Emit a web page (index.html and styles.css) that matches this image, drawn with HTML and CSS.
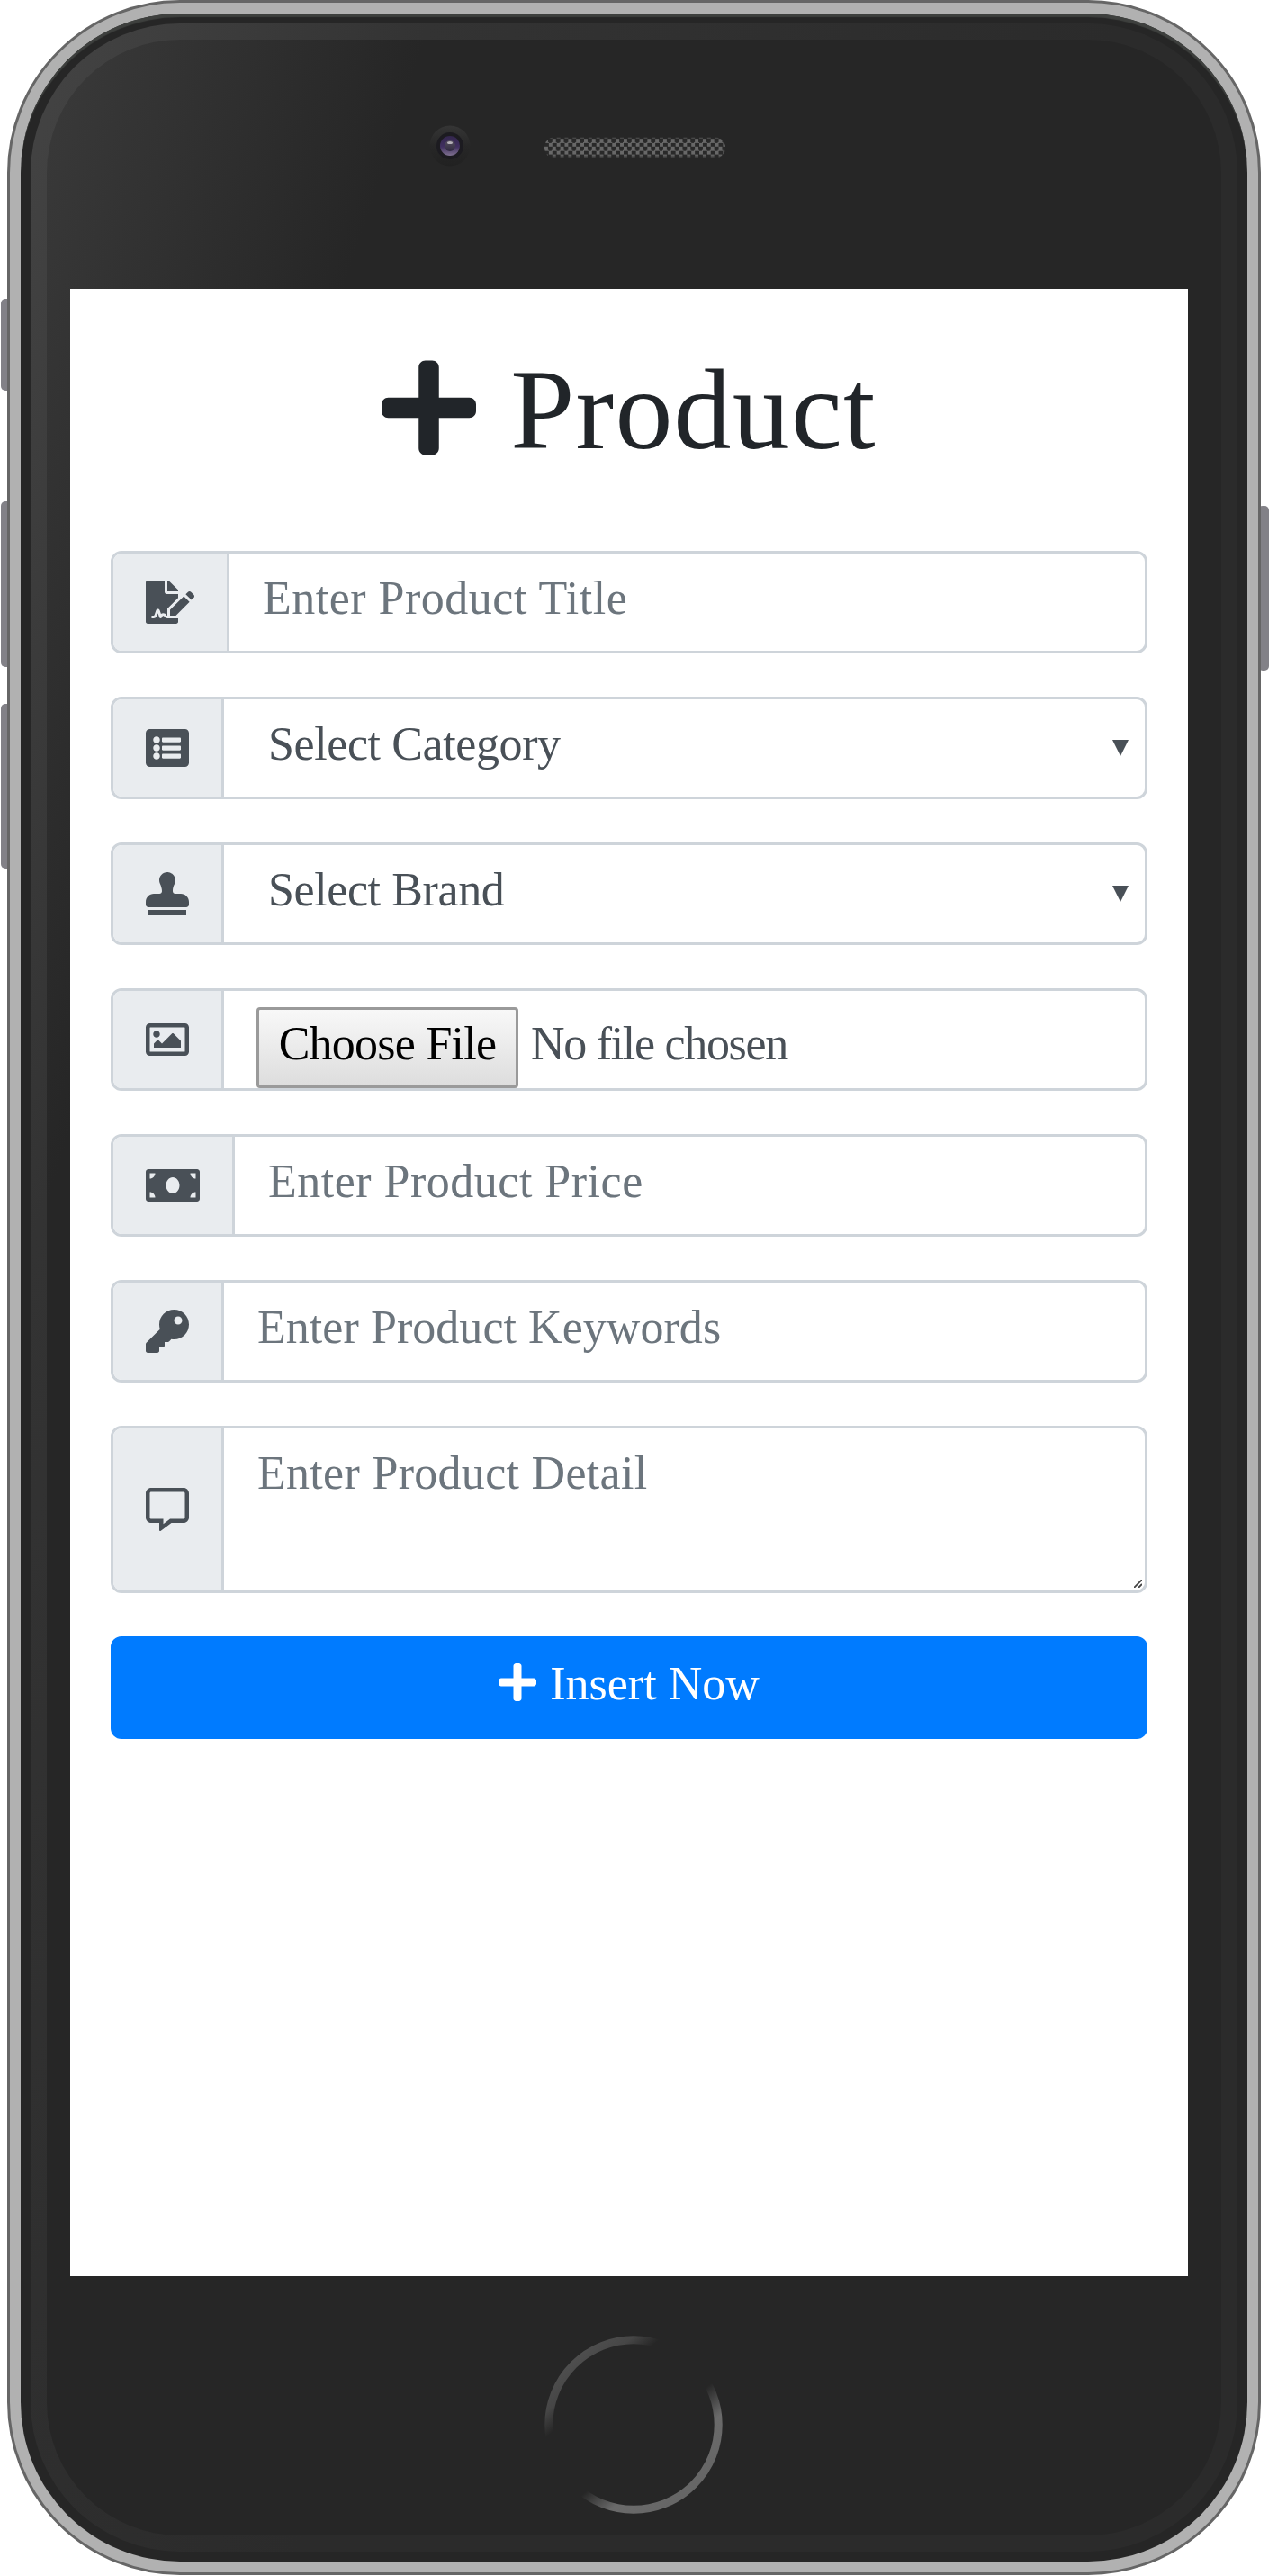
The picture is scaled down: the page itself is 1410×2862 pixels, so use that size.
FILE: index.html
```
<!DOCTYPE html>
<html lang="en">
<head>
<meta charset="utf-8">
<title>Product</title>
<link rel="stylesheet" href="styles.css">
</head>
<body>
<div class="device">
  <i class="side mute"></i><i class="side vol-up"></i><i class="side vol-down"></i><i class="side power"></i>
  <div class="shell"><div class="rim"><div class="bevel"><div class="face">
    <div class="sensors">
      <svg class="camera" viewBox="0 0 46 46">
        <defs>
          <linearGradient id="housing" x1="0" y1="0" x2="0" y2="1"><stop offset="0" stop-color="#353535"/><stop offset=".5" stop-color="#272727"/><stop offset="1" stop-color="#212121"/></linearGradient>
          <linearGradient id="lens" x1="0" y1="0" x2="0" y2="1"><stop offset="0" stop-color="#33264d"/><stop offset=".55" stop-color="#413060"/><stop offset="1" stop-color="#7f7190"/></linearGradient>
          <linearGradient id="pupil" x1="0" y1="0" x2="0" y2="1"><stop offset="0" stop-color="#56505f"/><stop offset="1" stop-color="#302941"/></linearGradient>
        </defs>
        <circle cx="23" cy="23" r="22.5" fill="url(#housing)"/>
        <circle cx="23" cy="23" r="15" fill="#1c1b20"/>
        <circle cx="23" cy="23" r="11" fill="url(#lens)"/>
        <circle cx="23" cy="23" r="6" fill="url(#pupil)"/>
        <ellipse cx="23" cy="19.5" rx="3" ry="1.6" fill="#b5b0b8"/>
      </svg>
      <div class="speaker"></div>
    </div>
    <main class="screen">
      <h1 class="title">
        <svg class="title-icon" viewBox="0 0 448 512"><path d="M416 208H272V64c0-17.67-14.33-32-32-32h-32c-17.67 0-32 14.33-32 32v144H32c-17.67 0-32 14.33-32 32v32c0 17.67 14.33 32 32 32h144v144c0 17.67 14.33 32 32 32h32c17.67 0 32-14.33 32-32V304h144c17.67 0 32-14.33 32-32v-32c0-17.67-14.33-32-32-32z"/></svg>
        <span>Product</span>
      </h1>
      <form class="form">
        <div class="group">
          <div class="addon"><svg viewBox="0 0 576 512"><path d="M218.17 424.14c-2.95-5.92-8.09-6.52-10.17-6.52s-7.22.59-10.02 6.19l-7.67 15.34c-6.37 12.78-25.03 11.37-29.48-2.09L144 386.59l-10.61 31.88c-5.89 17.66-22.38 29.53-41 29.53H80c-8.84 0-16-7.16-16-16s7.16-16 16-16h12.39c4.83 0 9.11-3.08 10.64-7.66l18.19-54.64c3.3-9.81 12.44-16.41 22.78-16.41s19.48 6.59 22.77 16.41l13.88 41.64c19.75-16.19 54.06-9.7 66 14.16 1.89 3.78 5.49 5.95 9.36 6.26v-82.12l128-127.09V160H248c-13.2 0-24-10.8-24-24V0H24C10.7 0 0 10.7 0 24v464c0 13.3 10.7 24 24 24h336c13.3 0 24-10.7 24-24v-40l-128-.11c-16.12-.31-30.58-9.28-37.83-23.75zM384 121.9c0-6.3-2.5-12.4-7-16.9L279.1 7c-4.5-4.5-10.6-7-17-7H256v128h128v-6.1zm-96 225.06V416h68.99l161.68-162.78-67.88-67.88L288 346.96zm280.54-179.63l-31.87-31.87c-9.94-9.94-26.07-9.94-36.01 0l-27.25 27.25 67.88 67.88 27.25-27.25c9.95-9.94 9.95-26.07 0-36.01z"/></svg></div>
          <div class="control placeholder"><span>Enter Product Title</span></div>
        </div>
        <div class="group">
          <div class="addon"><svg viewBox="0 0 512 512"><path d="M464 480H48c-26.51 0-48-21.49-48-48V80c0-26.51 21.49-48 48-48h416c26.51 0 48 21.49 48 48v352c0 26.51-21.49 48-48 48zM128 120c-22.091 0-40 17.909-40 40s17.909 40 40 40 40-17.909 40-40-17.909-40-40-40zm0 96c-22.091 0-40 17.909-40 40s17.909 40 40 40 40-17.909 40-40-17.909-40-40-40zm0 96c-22.091 0-40 17.909-40 40s17.909 40 40 40 40-17.909 40-40-17.909-40-40-40zm288-136v-32c0-6.627-5.373-12-12-12H204c-6.627 0-12 5.373-12 12v32c0 6.627 5.373 12 12 12h200c6.627 0 12-5.373 12-12zm0 96v-32c0-6.627-5.373-12-12-12H204c-6.627 0-12 5.373-12 12v32c0 6.627 5.373 12 12 12h200c6.627 0 12-5.373 12-12zm0 96v-32c0-6.627-5.373-12-12-12H204c-6.627 0-12 5.373-12 12v32c0 6.627 5.373 12 12 12h200c6.627 0 12-5.373 12-12z"/></svg></div>
          <div class="control select"><span class="category">Select Category</span><svg class="caret" viewBox="0 0 18 18"><path d="M0 0h18L9 18z"/></svg></div>
        </div>
        <div class="group">
          <div class="addon"><svg viewBox="0 0 512 512"><path d="M32 512h448v-64H32v64zm384-256h-66.56c-16.26 0-29.44-13.18-29.44-29.44v-9.46c0-27.37 8.88-53.41 21.46-77.72 9.11-17.61 12.9-38.39 9.05-60.42-6.77-38.78-38.47-70.7-77.26-77.45C212.62-9.04 160 37.33 160 96c0 14.16 3.12 27.54 8.69 39.58C182.02 164.43 192 194.7 192 226.49v.07c0 16.26-13.18 29.44-29.44 29.44H96c-53.02 0-96 42.98-96 96v32c0 17.67 14.33 32 32 32h448c17.67 0 32-14.33 32-32v-32c0-53.02-42.98-96-96-96z"/></svg></div>
          <div class="control select"><span class="brand">Select Brand</span><svg class="caret" viewBox="0 0 18 18"><path d="M0 0h18L9 18z"/></svg></div>
        </div>
        <div class="group">
          <div class="addon"><svg viewBox="0 0 512 512"><path d="M464 64H48C21.49 64 0 85.49 0 112v288c0 26.51 21.49 48 48 48h416c26.51 0 48-21.49 48-48V112c0-26.51-21.49-48-48-48zm-6 336H54a6 6 0 0 1-6-6V118a6 6 0 0 1 6-6h404a6 6 0 0 1 6 6v276a6 6 0 0 1-6 6zM128 152c-22.091 0-40 17.909-40 40s17.909 40 40 40 40-17.909 40-40-17.909-40-40-40zM96 352h320v-80l-87.515-87.515c-4.686-4.686-12.284-4.686-16.971 0L192 304l-39.515-39.515c-4.686-4.686-12.284-4.686-16.971 0L96 304v48z"/></svg></div>
          <div class="control file"><span class="file-button">Choose File</span><span class="file-name">No file chosen</span></div>
        </div>
        <div class="group">
          <div class="addon"><svg viewBox="0 0 640 512"><path d="M608 64H32C14.33 64 0 78.33 0 96v320c0 17.67 14.33 32 32 32h576c17.67 0 32-14.33 32-32V96c0-17.67-14.33-32-32-32zM48 400v-64c35.35 0 64 28.65 64 64H48zm0-224v-64h64c0 35.35-28.65 64-64 64zm272 176c-44.19 0-80-42.99-80-96 0-53.02 35.82-96 80-96s80 42.98 80 96c0 53.03-35.83 96-80 96zm272 48h-64c0-35.35 28.65-64 64-64v64zm0-224c-35.35 0-64-28.65-64-64h64v64z"/></svg></div>
          <div class="control placeholder"><span>Enter Product Price</span></div>
        </div>
        <div class="group">
          <div class="addon"><svg viewBox="0 0 512 512"><path d="M512 176.001C512 273.203 433.202 352 336 352c-11.22 0-22.19-1.062-32.827-3.069l-24.012 27.014A23.999 23.999 0 0 1 261.223 384H224v40c0 13.255-10.745 24-24 24h-40v40c0 13.255-10.745 24-24 24H24c-13.255 0-24-10.745-24-24v-78.059c0-6.365 2.529-12.47 7.029-16.971l161.802-161.802C163.108 213.814 160 195.271 160 176 160 78.798 238.797.001 335.999 0 433.488-.001 512 78.511 512 176.001zM336 128c0 26.51 21.49 48 48 48s48-21.49 48-48-21.49-48-48-48-48 21.49-48 48z"/></svg></div>
          <div class="control placeholder"><span class="keywords">Enter Product Keywords</span></div>
        </div>
        <div class="group tall">
          <div class="addon"><svg viewBox="0 0 512 512"><path d="M448 0H64C28.7 0 0 28.7 0 64v288c0 35.3 28.7 64 64 64h96v84c0 7.1 5.8 12 12 12 2.4 0 4.9-.7 7.1-2.4L304 416h144c35.3 0 64-28.7 64-64V64c0-35.3-28.7-64-64-64zm16 352c0 8.8-7.2 16-16 16H288l-12.8 9.6L208 428v-60H64c-8.8 0-16-7.2-16-16V64c0-8.8 7.2-16 16-16h384c8.8 0 16 7.2 16 16v288z"/></svg></div>
          <div class="control placeholder"><span class="detail">Enter Product Detail</span><svg class="grip" viewBox="0 0 9 9"><path d="M0 9L9 0M5 9L9 5" stroke="#444" stroke-width="1.8"/></svg></div>
        </div>
        <button class="submit" type="button">
          <svg class="submit-icon" viewBox="0 0 448 512"><path d="M416 208H272V64c0-17.67-14.33-32-32-32h-32c-17.67 0-32 14.33-32 32v144H32c-17.67 0-32 14.33-32 32v32c0 17.67 14.33 32 32 32h144v144c0 17.67 14.33 32 32 32h32c17.67 0 32-14.33 32-32V304h144c17.67 0 32-14.33 32-32v-32c0-17.67-14.33-32-32-32z"/></svg>
          <span>Insert Now</span>
        </button>
      </form>
    </main>
    <svg class="home" viewBox="-99 -99 198 198">
      <defs><linearGradient id="ring" gradientUnits="userSpaceOnUse" x1="-64" y1="-74" x2="64" y2="74">
        <stop offset="0" stop-color="#4e4e4e"/><stop offset=".12" stop-color="#464646"/><stop offset=".23" stop-color="#262626"/><stop offset=".61" stop-color="#262626"/><stop offset=".78" stop-color="#6a6a6a"/><stop offset="1" stop-color="#666"/>
      </linearGradient></defs>
      <circle r="94.2" fill="none" stroke="url(#ring)" stroke-width="9"/>
    </svg>
  </div></div></div></div>
</div>
</body>
</html>
```
FILE: styles.css
```
* { box-sizing: border-box; }
body {
  margin: 0;
  background: #fff;
  font-family: "Liberation Serif", "Times New Roman", serif;
}
svg { display: block; flex: none; fill: currentColor; }

/* Phone body */
.device {
  position: relative;
  width: 1410px;
  height: 2862px;
  padding: 0 9px 1px 8px;
}
.side {
  position: absolute;
  left: 0.5px;
  width: 12px;
  background: #828187;
  border-radius: 5px;
}
.mute { top: 332px; height: 102px; }
.vol-up { top: 557px; height: 184px; }
.vol-down { top: 782px; height: 183px; }
.power { left: auto; right: 0.5px; top: 562px; height: 183px; }
.shell {
  position: relative;
  height: 100%;
  padding: 12px;
  border: 3px solid #666;
  border-radius: 192px;
  background: #b1b1b1;
}
.rim {
  height: 100%;
  padding: 11px;
  border-radius: 177px;
  background: #262626;
  box-shadow: inset 0 5px 1px -1px #3e403e;
}
.bevel {
  height: 100%;
  padding: 18px;
  border-radius: 166px;
  background: linear-gradient(108deg, #444 0, #333 420px, #2b2b2b 1150px);
}
.face {
  height: 100%;
  border-radius: 148px;
  background: linear-gradient(108deg, #3a3a3a 0, #262626 400px);
}
.sensors {
  display: flex;
  align-items: center;
  gap: 82px;
  height: 277px;
  padding: 0 0 42px 425px;
}
.camera { width: 46px; height: 46px; }
.speaker {
  width: 201px;
  height: 24px;
  margin-top: 4px;
  border-radius: 12px;
  background:
    linear-gradient(#262626 0, transparent 3px, transparent 20px, #262626 24px),
    repeating-conic-gradient(#292929 0 25%, #686868 0 50%) 0 2px / 8.8px 8.8px;
}
.home { width: 198px; height: 198px; margin: 66px 0 0 553px; }

/* Screen */
.screen {
  width: 1242px;
  height: 2208px;
  margin-left: 26px;
  padding: 61px 45px 0;
  background: #fff;
}
.title {
  display: flex;
  justify-content: center;
  gap: 38px;
  margin: 0 0 86px;
  color: #212529;
  font-size: 128px;
  font-weight: 400;
  letter-spacing: 1.2px;
  line-height: 146px;
  height: 144px;
}
.title-icon { width: 105px; height: 120px; margin-top: 11px; }
.form {
  display: flex;
  flex-direction: column;
  gap: 48px;
  color: #495057;
  font-size: 52px;
  line-height: 60px;
  white-space: nowrap;
}
.group {
  display: flex;
  height: 114px;
  border: 3px solid #ced4da;
  border-radius: 12px;
  background: #fff;
  overflow: hidden;
}
.tall { height: 186px; }
.addon {
  display: flex;
  align-items: center;
  padding: 0 36px;
  border-right: 3px solid #ced4da;
  background: #e9ecef;
}
.addon svg { height: 48px; }
.control {
  position: relative;
  display: flex;
  align-items: flex-start;
  flex: 1;
  padding: 20px 18px 0 37px;
}
.placeholder { color: #6c757d; letter-spacing: 0.5px; }
.select { justify-content: space-between; padding-left: 49px; }
.file { padding: 18px 18px 0 36px; }
.caret { width: 18px; height: 18px; margin-top: 25px; }
.category { letter-spacing: -0.4px; }
.brand { letter-spacing: -0.4px; }
.keywords { letter-spacing: 0.05px; }
.detail { letter-spacing: 0.3px; }
.file-button {
  width: 291px;
  height: 90px;
  padding-top: 8px;
  border: 3px solid #9a9a9a;
  border-radius: 4px;
  background: linear-gradient(#f8f8f8, #ddd);
  color: #000;
  letter-spacing: -0.75px;
  text-align: center;
}
.file-name { padding: 11px 0 0 14px; letter-spacing: -1.3px; }
.grip { position: absolute; right: 3px; bottom: 3px; width: 9px; height: 9px; }
.submit {
  display: flex;
  justify-content: center;
  gap: 15px;
  height: 114px;
  padding: 23px 0 0;
  border: 0;
  border-radius: 12px;
  background: #007bff;
  color: #fff;
  font: inherit;
}
.submit-icon { width: 42px; height: 48px; margin-top: 4px; }
```
